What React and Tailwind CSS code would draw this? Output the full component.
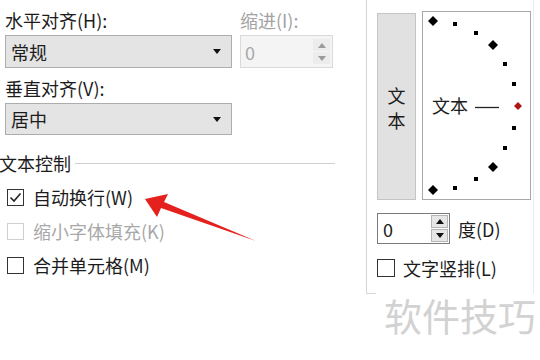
import React from "react";

const FONT = { fontFamily: '"Noto Sans CJK SC", "Noto Sans", sans-serif' };

function Arrow() {
  return (
    <svg width="8" height="5" viewBox="0 0 8 5">
      <polygon points="0,0 8,0 4,5" fill="#111" />
    </svg>
  );
}

function SpinButtons({ disabled }) {
  const c = disabled ? "#9a9a9a" : "#111";
  return (
    <div className="flex flex-col w-[17px] h-full gap-px">
      <div className={`flex-1 flex items-center justify-center ${disabled ? "bg-[#ececec]" : "bg-[#e6e6e6] border border-[#b5b5b5]"}`}>
        <svg width="8" height="5" viewBox="0 0 8 5"><polygon points="4,0 8,5 0,5" fill={c} /></svg>
      </div>
      <div className={`flex-1 flex items-center justify-center ${disabled ? "bg-[#ececec]" : "bg-[#e6e6e6] border border-[#b5b5b5]"}`}>
        <svg width="8" height="5" viewBox="0 0 8 5"><polygon points="0,0 8,0 4,5" fill={c} /></svg>
      </div>
    </div>
  );
}

function Check({ checked, disabled, label }) {
  return (
    <div className="flex items-center h-[34px]">
      <div
        className={`ml-[2px] w-[17px] h-[17px] border flex items-center justify-center ${
          disabled ? "border-[#cfcfcf]" : "border-[#333333]"
        }`}
      >
        {checked && (
          <svg width="13" height="11" viewBox="0 0 13 11">
            <polyline points="1.5,5.5 5,9 11.5,1.5" fill="none" stroke="#222" strokeWidth="1.6" />
          </svg>
        )}
      </div>
      <span className={`ml-[9px] text-[18px] leading-[24px] ${disabled ? "text-[#a8a8a8]" : "text-[#1c1c1c]"}`}>
        {label}
      </span>
    </div>
  );
}

function Diamond({ x, y, r = 5, fill = "#000" }) {
  return <polygon points={`${x},${y - r} ${x + r},${y} ${x},${y + r} ${x - r},${y}`} fill={fill} />;
}
function Sq({ x, y }) {
  return <rect x={x - 2} y={y - 2} width="4" height="4" fill="#000" />;
}

export default function App() {
  return (
    <div className="w-[540px] h-[360px] bg-white relative overflow-hidden flex" style={FONT}>
      {/* Left column */}
      <div className="w-[366px] shrink-0 flex flex-col pl-[5px] pt-[8px] text-[#1c1c1c]">
        <div className="flex gap-[8px]">
          <div className="w-[227px] flex flex-col">
            <div className="text-[18px] leading-[24px]">水平对齐(H):</div>
            <div className="mt-[3px] h-[33px] bg-[#e4e4e4] border border-[#adadad] flex items-center pl-[5px] pr-[10px]">
              <span className="text-[18px] leading-[24px] flex-1">常规</span>
              <Arrow />
            </div>
          </div>
          <div className="w-[93px] flex flex-col">
            <div className="text-[18px] leading-[24px] text-[#a3a3a3]">缩进(I):</div>
            <div className="mt-[3px] h-[33px] bg-[#f4f4f4] border border-[#dadada] flex items-center pl-[4px] pr-[2px] py-[3px]">
              <span className="text-[18px] leading-[24px] flex-1 text-[#a8a8a8]">0</span>
              <SpinButtons disabled />
            </div>
          </div>
        </div>
        <div className="mt-[8px] text-[18px] leading-[24px]">垂直对齐(V):</div>
        <div className="mt-[3px] w-[227px] h-[32px] bg-[#e4e4e4] border border-[#adadad] flex items-center pl-[5px] pr-[10px]">
          <span className="text-[18px] leading-[24px] flex-1">居中</span>
          <Arrow />
        </div>
        <div className="mt-[16px] -ml-[6px] flex items-center mr-[31px]">
          <span className="text-[18px] leading-[24px]">文本控制</span>
          <div className="flex-1 h-px bg-[#cfcfcf] ml-[4px] mt-[1px]" />
        </div>
        <div className="mt-[5px] flex flex-col">
          <Check checked label="自动换行(W)" />
          <Check disabled label="缩小字体填充(K)" />
          <Check label="合并单元格(M)" />
        </div>
      </div>

      {/* Right column (group box) */}
      <div className="w-[168px] h-[294px] shrink-0 flex flex-col border-l border-r border-l-[#d6d6d6] border-r-[#ececec] pl-[10px] pt-[11px]">
        <div className="flex items-start gap-[6px]">
          <div className="mt-[2px] w-[39px] h-[187px] bg-[#e1e1e1] border border-[#c4c4c4] flex flex-col items-center justify-center text-[18px] leading-[25px] text-[#1c1c1c]">
            <span className="mt-[3px]">文</span>
            <span>本</span>
          </div>
          <div className="relative w-[109px] h-[189px] bg-white border border-[#a9a9a9]">
            <svg className="absolute left-0 top-0" width="107" height="187" viewBox="0 0 107 187">
              <Diamond x={10} y={9} />
              <Sq x={32} y={12} />
              <Sq x={53} y={21} />
              <Diamond x={70} y={33} />
              <Sq x={82} y={52} />
              <Sq x={91} y={72} />
              <Diamond x={95} y={94} r={4} fill="#b01515" />
              <Sq x={91} y={116} />
              <Sq x={82} y={136} />
              <Diamond x={70} y={155} />
              <Sq x={53} y={167} />
              <Sq x={32} y={176} />
              <Diamond x={10} y={178} />
              <line x1="52" y1="95.5" x2="76" y2="95.5" stroke="#222" strokeWidth="1.3" />
            </svg>
            <span className="absolute left-[9px] top-[81px] text-[18px] leading-[24px] text-[#1c1c1c]">文本</span>
          </div>
        </div>
        <div className="mt-[13px] flex items-center">
          <div className="w-[73px] h-[31px] bg-white border border-[#7a7a7a] flex items-center pl-[5px] pr-[1px] py-[1px]">
            <span className="text-[18px] leading-[24px] flex-1 text-[#1c1c1c]">0</span>
            <SpinButtons />
          </div>
          <span className="ml-[8px] text-[18px] leading-[24px] text-[#1c1c1c]">度(D)</span>
        </div>
        <div className="mt-[14px] flex items-center h-[20px]">
          <div className="w-[18px] h-[18px] border border-[#333333]" />
          <span className="ml-[8px] text-[18px] leading-[24px] text-[#1c1c1c]">文字竖排(L)</span>
        </div>
        <div className="flex-1" />
        <div className="-ml-[10px] w-[9px] h-px bg-[#d6d6d6]" />
      </div>

      {/* Red arrow overlay */}
      <svg className="absolute left-0 top-0 pointer-events-none" width="540" height="360" viewBox="0 0 540 360">
        <polygon points="145,199 168,194 164,202 256,241 161,208 157,217" fill="#e5211d" />
      </svg>

      {/* Watermark */}
      <div className="absolute left-[384px] top-[296px] text-[38px] leading-none text-[#d2d2d2]">软件技巧</div>
    </div>
  );
}
